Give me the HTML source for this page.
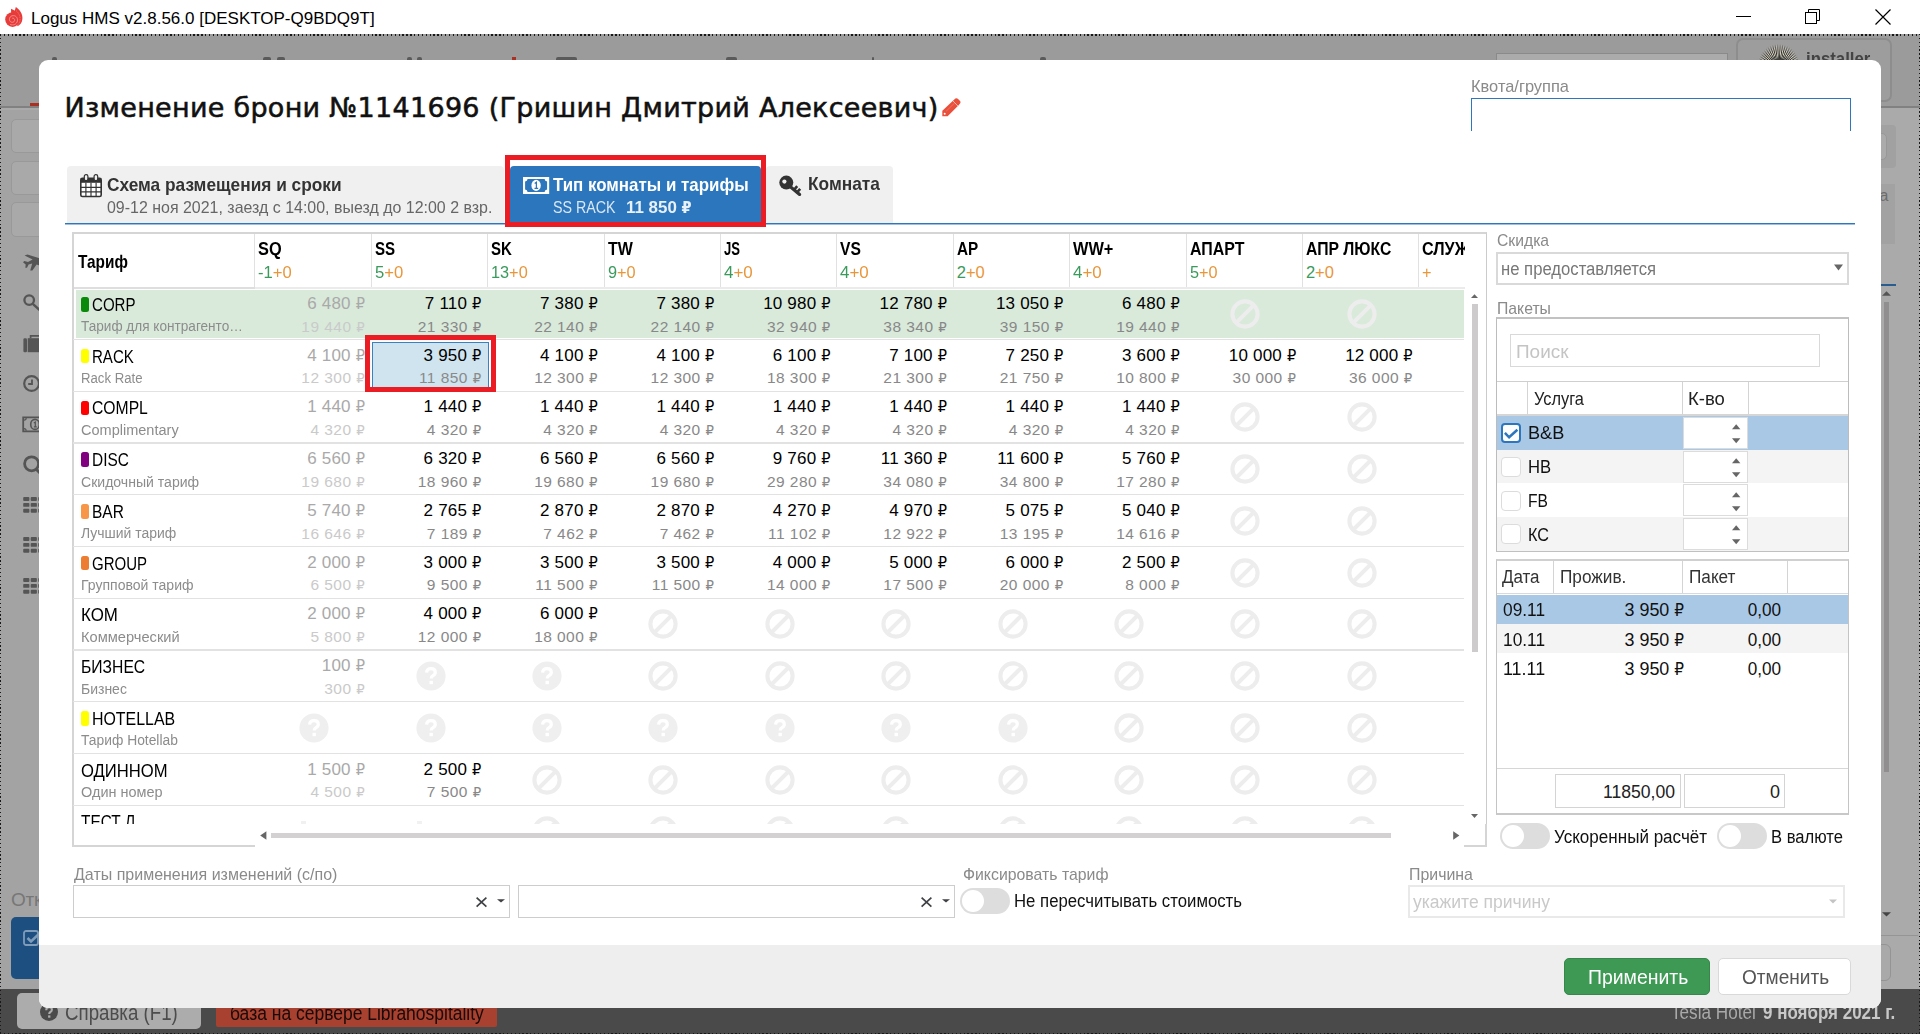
<!DOCTYPE html>
<html lang="ru"><head><meta charset="utf-8"><title>Logus HMS</title>
<style>
*{box-sizing:border-box;margin:0;padding:0}
html,body{width:1920px;height:1034px;overflow:hidden;background:#a4a4a4;font-family:"Liberation Sans","DejaVu Sans",sans-serif;}
.a{position:absolute}
.t{position:absolute;white-space:nowrap;line-height:1;transform-origin:0 50%}
.t.r{transform-origin:100% 50%}
#root{position:absolute;left:0;top:0;width:1920px;height:1034px;overflow:hidden}
.rub{font-family:"DejaVu Sans Condensed","DejaVu Sans",sans-serif;font-size:.95em}
svg{position:absolute;overflow:visible}
</style></head>
<body><div id="root">
<div class="a" style="left:0px;top:0px;width:1920px;height:34px;background:#fff"></div>
<div class="t" style="left:31.00px;top:9.61px;font-size:17px;color:#000;">Logus HMS v2.8.56.0 [DESKTOP-Q9BDQ9T]</div>
<svg style="left:5px;top:7px;" width="18" height="21" viewBox="0 0 18 21"><circle cx="7.6" cy="12.6" r="7.4" fill="#e73c3a"/><path d="M10.8 0C14.6 2.4 17.8 6.8 17.4 12C17.1 15.4 15.2 18 12.6 19.2L8.6 8.6Z" fill="#e73c3a"/><path d="M6 1.8L11.6 4.6L11 9L6.2 7.2Z" fill="#e73c3a"/><path d="M7.2 11.2C8.6 10.8 10 12 9.6 13.6C9.2 15.4 6.8 15.9 5.4 14.6C3.6 12.9 4.4 9.6 7 8.8C10.4 7.8 13 10.6 12.4 14C11.8 17.2 8.2 18.8 5.2 17.4" fill="none" stroke="#f4a19f" stroke-width="0.8"/><path d="M11 3.5C14 6 15.6 9.6 15 13.6C14.6 16 13.2 17.8 11.4 18.8" fill="none" stroke="#f08e8c" stroke-width="0.6" stroke-dasharray="1.6 0.8"/></svg>
<svg style="left:1736px;top:16px;" width="15" height="1" viewBox="0 0 15 1"><rect width="15" height="1" fill="#000"/></svg>
<svg style="left:1805px;top:9px;" width="16" height="16" viewBox="0 0 16 16"><rect x="0.5" y="3.5" width="11" height="11" fill="none" stroke="#000"/><path d="M3.5 3.5V0.5H14.5V11.5H11.5" fill="none" stroke="#000"/></svg>
<svg style="left:1875px;top:9px;" width="16" height="16" viewBox="0 0 16 16"><path d="M0.5 0.5L15.5 15.5M15.5 0.5L0.5 15.5" stroke="#000" stroke-width="1.2"/></svg>
<div class="a" style="left:0px;top:34px;width:1920px;height:1000px;background:#aaaaaa"></div>
<div class="a" style="left:0px;top:34px;width:1920px;height:74px;background:#9b9b9b;border-bottom:2px solid #818181"></div>
<div class="a" style="left:1496px;top:53px;width:232px;height:30px;background:#ababab;border:1px solid #8a8a8a"></div>
<div class="a" style="left:1736px;top:38px;width:156px;height:64px;background:#9d9d9d;border:2px solid #8d8d8d;border-radius:7px"></div>
<div class="a" style="left:1757px;top:44px;width:42px;height:40px;border-radius:50%;background:repeating-conic-gradient(from -90deg at 52% 62%,#d8d5c6 0deg,#8d8a80 1.6deg,#2e2e2b 3.2deg,#77746b 4.6deg,#d8d5c6 6deg);-webkit-mask-image:radial-gradient(ellipse at 52% 62%,#000 0,#000 52%,rgba(0,0,0,.55) 62%,transparent 72%);mask-image:radial-gradient(ellipse at 52% 62%,#000 0,#000 52%,rgba(0,0,0,.55) 62%,transparent 72%)"></div>
<div class="a" style="left:1764px;top:54px;width:30px;height:30px;border-radius:50%;background:radial-gradient(circle at 50% 60%,#2c2c2a 0,#3a3a37 45%,rgba(60,60,56,0) 75%)"></div>
<div class="t" style="left:1805.50px;top:48.92px;font-size:19px;font-weight:bold;color:#444;transform:scaleX(0.883);">installer</div>
<div class="a" style="left:30px;top:103px;width:9px;height:3px;background:#ab3024"></div>
<div class="a" style="left:52px;top:57px;width:5px;height:3px;background:#5a5a5a;border-radius:2px 2px 0 0"></div>
<div class="a" style="left:263px;top:57px;width:8px;height:3px;background:#5a5a5a;border-radius:2px 2px 0 0"></div>
<div class="a" style="left:277px;top:57px;width:8px;height:3px;background:#5a5a5a;border-radius:2px 2px 0 0"></div>
<div class="a" style="left:407px;top:57px;width:5px;height:3px;background:#5a5a5a;border-radius:2px 2px 0 0"></div>
<div class="a" style="left:417px;top:57px;width:5px;height:3px;background:#5a5a5a;border-radius:2px 2px 0 0"></div>
<div class="a" style="left:555.5px;top:57px;width:21px;height:3px;background:#5a5a5a;border-radius:2px 2px 0 0"></div>
<div class="a" style="left:726px;top:57px;width:11px;height:3px;background:#5a5a5a;border-radius:2px 2px 0 0"></div>
<div class="a" style="left:872px;top:57px;width:2px;height:3px;background:#5a5a5a;border-radius:2px 2px 0 0"></div>
<div class="a" style="left:1040px;top:57px;width:6px;height:3px;background:#5a5a5a;border-radius:2px 2px 0 0"></div>
<div class="a" style="left:512px;top:57px;width:4px;height:3px;background:#ab3024"></div>
<div class="a" style="left:0px;top:110px;width:60px;height:879px;background:#a3a3a3"></div>
<div class="a" style="left:11px;top:118.5px;width:40px;height:34.5px;background:#a9a9a9;border:1px solid #999;border-radius:5px"></div>
<div class="a" style="left:11px;top:160.5px;width:40px;height:34.5px;background:#a9a9a9;border:1px solid #999;border-radius:5px"></div>
<div class="a" style="left:11px;top:202px;width:40px;height:34.5px;background:#a9a9a9;border:1px solid #999;border-radius:5px"></div>
<svg style="left:22px;top:253px;" width="18" height="18" viewBox="0 0 18 18"><path d="M2.6 2.6L5.4 1.4L17.5 5.2V12.6L14.6 11.6L10.4 17.6H8.2L10.2 10.4L6.6 11.6L5 14.8H3.3L3.7 11.4L1 9.2L2.3 8L6 9L10.6 6.6Z" fill="#555"/></svg>
<svg style="left:22px;top:294px;" width="18" height="18" viewBox="0 0 18 18"><circle cx="7.2" cy="6.1" r="4.8" fill="none" stroke="#555" stroke-width="2.3"/><path d="M10.8 9.8L18 16.4" stroke="#555" stroke-width="2.5"/></svg>
<svg style="left:22px;top:334px;" width="18" height="20" viewBox="0 0 18 20"><rect x="1.4" y="4.2" width="3.6" height="14" rx="1.3" fill="#555"/><rect x="5.7" y="4.2" width="13" height="14" fill="#555"/><path d="M8.6 4.2V1.9H18" fill="none" stroke="#555" stroke-width="1.7"/></svg>
<svg style="left:22px;top:374px;" width="18" height="19" viewBox="0 0 18 19"><circle cx="9.6" cy="9.5" r="7.4" fill="none" stroke="#555" stroke-width="2.2"/><path d="M10 5.4V10H6.2" fill="none" stroke="#555" stroke-width="1.8"/></svg>
<svg style="left:22px;top:416px;" width="18" height="16" viewBox="0 0 18 16"><path d="M1.2 1.4H22V15.4H1.2Z" fill="none" stroke="#555" stroke-width="1.8"/><path d="M2 4.2Q4.2 4 4.2 2M2 12.6Q4.2 12.8 4.2 14.8" fill="none" stroke="#555" stroke-width="1.2"/><ellipse cx="13" cy="8.4" rx="4.3" ry="5" fill="none" stroke="#555" stroke-width="1.6"/><path d="M11.8 6.9L13.3 6V10.8M11.9 10.9H14.8" stroke="#555" stroke-width="1.2" fill="none"/></svg>
<svg style="left:22px;top:455px;" width="18" height="19" viewBox="0 0 18 19"><circle cx="9.6" cy="8.8" r="7" fill="none" stroke="#555" stroke-width="2.8"/><path d="M14 14L18 18" stroke="#555" stroke-width="3"/></svg>
<svg style="left:23px;top:497px;" width="17" height="16" viewBox="0 0 17 16"><rect x="0.2" y="0" width="6.2" height="3.9" rx="0.9" fill="#555"/><rect x="0.2" y="5.9" width="6.2" height="3.9" rx="0.9" fill="#555"/><rect x="0.2" y="11.8" width="6.2" height="3.9" rx="0.9" fill="#555"/><rect x="7.7" y="0" width="6.2" height="3.9" rx="0.9" fill="#555"/><rect x="7.7" y="5.9" width="6.2" height="3.9" rx="0.9" fill="#555"/><rect x="7.7" y="11.8" width="6.2" height="3.9" rx="0.9" fill="#555"/><rect x="15.2" y="0" width="6.2" height="3.9" rx="0.9" fill="#555"/><rect x="15.2" y="5.9" width="6.2" height="3.9" rx="0.9" fill="#555"/><rect x="15.2" y="11.8" width="6.2" height="3.9" rx="0.9" fill="#555"/></svg>
<svg style="left:23px;top:537.3px;" width="17" height="16" viewBox="0 0 17 16"><rect x="0.2" y="0" width="6.2" height="3.9" rx="0.9" fill="#555"/><rect x="0.2" y="5.9" width="6.2" height="3.9" rx="0.9" fill="#555"/><rect x="0.2" y="11.8" width="6.2" height="3.9" rx="0.9" fill="#555"/><rect x="7.7" y="0" width="6.2" height="3.9" rx="0.9" fill="#555"/><rect x="7.7" y="5.9" width="6.2" height="3.9" rx="0.9" fill="#555"/><rect x="7.7" y="11.8" width="6.2" height="3.9" rx="0.9" fill="#555"/><rect x="15.2" y="0" width="6.2" height="3.9" rx="0.9" fill="#555"/><rect x="15.2" y="5.9" width="6.2" height="3.9" rx="0.9" fill="#555"/><rect x="15.2" y="11.8" width="6.2" height="3.9" rx="0.9" fill="#555"/></svg>
<svg style="left:23px;top:578px;" width="17" height="16" viewBox="0 0 17 16"><rect x="0.2" y="0" width="6.2" height="3.9" rx="0.9" fill="#555"/><rect x="0.2" y="5.9" width="6.2" height="3.9" rx="0.9" fill="#555"/><rect x="0.2" y="11.8" width="6.2" height="3.9" rx="0.9" fill="#555"/><rect x="7.7" y="0" width="6.2" height="3.9" rx="0.9" fill="#555"/><rect x="7.7" y="5.9" width="6.2" height="3.9" rx="0.9" fill="#555"/><rect x="7.7" y="11.8" width="6.2" height="3.9" rx="0.9" fill="#555"/><rect x="15.2" y="0" width="6.2" height="3.9" rx="0.9" fill="#555"/><rect x="15.2" y="5.9" width="6.2" height="3.9" rx="0.9" fill="#555"/><rect x="15.2" y="11.8" width="6.2" height="3.9" rx="0.9" fill="#555"/></svg>
<div class="t" style="left:11.00px;top:889.92px;font-size:19px;letter-spacing:-0.3px;color:#777;">Отк</div>
<div class="a" style="left:10.5px;top:917px;width:60px;height:61.5px;background:#1d5080;border-radius:5px"></div>
<svg style="left:23px;top:930px;" width="18" height="16" viewBox="0 0 18 16"><rect x="1" y="1" width="14" height="14" rx="2" fill="none" stroke="#7f9cb8" stroke-width="1.8"/><path d="M4.5 8L8 11.5L17 3" fill="none" stroke="#7f9cb8" stroke-width="2.6"/></svg>
<div class="a" style="left:1881px;top:125px;width:15px;height:43px;background:#a1a1a1;border-radius:0 4px 4px 0"></div>
<div class="a" style="left:1870px;top:133px;width:17px;height:27px;background:#ababab;border:1px solid #989898;border-radius:5px"></div>
<div class="a" style="left:1881px;top:184px;width:14px;height:60px;background:#a2a2a2"></div>
<div class="t" style="left:1879.50px;top:188.46px;font-size:16px;color:#6d6d6d;">а</div>
<div class="a" style="left:1881px;top:284px;width:15px;height:1.5px;background:#2a5d8f"></div>
<svg style="left:1882px;top:291px;" width="9" height="5" viewBox="0 0 9 5"><path d="M0 4.8L4.5 0.3L9 4.8Z" fill="#555"/></svg>
<div class="a" style="left:1884px;top:301.5px;width:5.3px;height:470px;background:#908e8f"></div>
<svg style="left:1881.5px;top:912px;" width="9" height="5" viewBox="0 0 9 5"><path d="M0 0.3H9L4.5 4.6Z" fill="#444"/></svg>
<div class="a" style="left:1881px;top:934.5px;width:37px;height:1.3px;background:#959595"></div>
<div class="a" style="left:1870px;top:944px;width:21px;height:37px;background:#a9a9a9;border:1px solid #949494;border-radius:6px"></div>
<div class="a" style="left:0px;top:989px;width:1920px;height:45px;background:#4a4a4a"></div>
<div class="a" style="left:17px;top:993px;width:184px;height:36px;background:#acacac;border-radius:5px"></div>
<svg style="left:40px;top:1003px;" width="18" height="18" viewBox="0 0 18 18"><circle cx="9" cy="9" r="9" fill="#4a4a4a"/><path d="M6.2 7.2Q6.3 4.3 9.1 4.3Q11.9 4.3 11.9 6.8Q11.9 8.2 10.4 9Q9.2 9.7 9.2 11" fill="none" stroke="#acacac" stroke-width="2.1"/><rect x="8.1" y="12.4" width="2.3" height="2.3" fill="#acacac"/></svg>
<div class="t" style="left:64.80px;top:1001.55px;font-size:22.5px;color:#4c4c4c;transform:scaleX(0.831);">Справка (F1)</div>
<div class="a" style="left:216px;top:993px;width:281px;height:34px;background:#a8412f;border-radius:2px"></div>
<div class="t" style="left:230.00px;top:1003.27px;font-size:20px;color:#1a0a08;transform:scaleX(0.874);">база на сервере Librahospitality</div>
<div class="t" style="left:1671.00px;top:1001.65px;font-size:20.5px;color:#a9a9a9;transform:scaleX(0.836);">Tesla Hotel</div>
<div class="t" style="left:1763.00px;top:1001.65px;font-size:20.5px;font-weight:bold;color:#c8c8c8;transform:scaleX(0.828);">9 ноября 2021 г.</div>
<div class="a" style="left:0px;top:34px;width:1920px;height:1.5px;background:repeating-linear-gradient(90deg,#181818 0,#181818 1.3px,transparent 1.3px,transparent 3.87px)"></div>
<div class="a" style="left:0px;top:1032.5px;width:1920px;height:1.5px;background:repeating-linear-gradient(90deg,#181818 0,#181818 1.3px,transparent 1.3px,transparent 3.87px)"></div>
<div class="a" style="left:0px;top:34px;width:1.4px;height:1000px;background:repeating-linear-gradient(180deg,#181818 0,#181818 1.3px,transparent 1.3px,transparent 3.87px)"></div>
<div class="a" style="left:1918.5px;top:34px;width:1.5px;height:1000px;background:repeating-linear-gradient(180deg,#181818 0,#181818 1.3px,transparent 1.3px,transparent 3.87px)"></div>
<div class="a" style="left:39px;top:60px;width:1842px;height:948px;background:#fff;border-radius:9px;overflow:hidden">
<div class="a" style="left:0;top:885px;width:1842px;height:63px;background:#eeeeee"></div>
</div>
<div class="t" style="left:64.50px;top:93.54px;font-size:27px;letter-spacing:0.28px;color:#111;font-family:'DejaVu Sans',sans-serif;-webkit-text-stroke:0.55px #111;">Изменение брони №1141696 (Гришин Дмитрий Алексеевич)</div>
<svg style="left:941.5px;top:97.5px;" width="19" height="18.5" viewBox="0 0 19 18.5"><path d="M0.3 18.2V12.7L11.5 2.2L13.3 0.6Q14.6 -0.3 15.8 0.8L18.1 3.1Q19.1 4.3 18 5.6L16.4 7.4L5.6 18.2Z" fill="#e8503c"/><path d="M10.9 2.9L15.9 8" stroke="#fbe3df" stroke-width="0.7"/><path d="M4.2 13.2L12.6 5" stroke="#f08a7c" stroke-width="0.6"/><circle cx="2.7" cy="15.7" r="1" fill="#fff"/></svg>
<div class="t" style="left:1471.00px;top:77.61px;font-size:17px;color:#8a8a8a;transform:scaleX(0.966);">Квота/группа</div>
<div class="a" style="left:1471px;top:98px;width:380px;height:33px;border:1px solid #2e76bd;border-bottom:none"></div>
<div class="a" style="left:67px;top:166px;width:437px;height:58px;background:#f0f0f0;border-radius:4px 4px 0 0"></div>
<div class="a" style="left:766px;top:166px;width:127px;height:58px;background:#f0f0f0;border-radius:4px 4px 0 0"></div>
<div class="a" style="left:65px;top:223px;width:1790px;height:1px;background:#2e76bd"></div>
<div class="a" style="left:65px;top:224px;width:1790px;height:1px;background:#9dbfe0"></div>
<div class="a" style="left:510px;top:166px;width:251px;height:58px;background:#2b76bc;border-radius:4px 4px 0 0"></div>
<div class="a" style="left:505px;top:155px;width:261px;height:72px;border:5px solid #ec1c24"></div>
<svg style="left:80.3px;top:174px;" width="22" height="23.3" viewBox="0 0 22 23.3"><rect x="0.8" y="4.4" width="20.4" height="18.1" rx="1.6" fill="#fff" stroke="#333" stroke-width="1.6"/><rect x="0.8" y="4.4" width="20.4" height="4.4" fill="#333"/><path d="M0.8 13.4H21.2M0.8 17.9H21.2M5.9 8.8V22.5M11 8.8V22.5M16.1 8.8V22.5" stroke="#333" stroke-width="1.15" fill="none"/><rect x="4.3" y="0.6" width="3.6" height="6" rx="1.7" fill="#f0f0f0" stroke="#333" stroke-width="1.2"/><rect x="14.1" y="0.6" width="3.6" height="6" rx="1.7" fill="#f0f0f0" stroke="#333" stroke-width="1.2"/></svg>
<div class="t" style="left:107.00px;top:174.52px;font-size:19px;font-weight:bold;color:#333;transform:scaleX(0.910);">Схема размещения и сроки</div>
<div class="t" style="left:107.00px;top:198.93px;font-size:16.5px;color:#666;transform:scaleX(0.967);">09-12 ноя 2021, заезд с 14:00, выезд до 12:00 2 взр.</div>
<svg style="left:522.8px;top:177px;" width="26.2" height="17" viewBox="0 0 26.2 17"><rect x="0" y="0" width="26.2" height="17" fill="#fff"/><path d="M4.6 2.1H21.6Q21.8 4.4 24.1 4.6V12.4Q21.8 12.6 21.6 14.9H4.6Q4.4 12.6 2.1 12.4V4.6Q4.4 4.4 4.6 2.1Z" fill="#2b76bc"/><ellipse cx="13.1" cy="8.4" rx="4.7" ry="5.6" fill="#fff"/><path d="M11.7 6.5L13.4 5.2V11.2M11.5 11.4H15.2" stroke="#2b76bc" stroke-width="1.25" fill="none"/></svg>
<div class="t" style="left:553.00px;top:174.62px;font-size:19px;font-weight:bold;color:#fff;transform:scaleX(0.890);">Тип комнаты и тарифы</div>
<div class="t" style="left:553.00px;top:198.83px;font-size:16.5px;color:#dbe7f3;transform:scaleX(0.864);">SS RACK</div>
<div class="t" style="left:626.40px;top:198.83px;font-size:16.5px;font-weight:bold;color:#e8f0f8;transform:scaleX(1.025);">11 850 <span class="rub">₽</span></div>
<svg style="left:779px;top:175px;" width="24" height="22" viewBox="0 0 24 22"><circle cx="7.3" cy="7.6" r="7" fill="#333"/><circle cx="5.4" cy="6.6" r="2.1" fill="#f0f0f0"/><path d="M10.5 11L20.6 19.4" stroke="#333" stroke-width="3.2" stroke-linecap="round"/><path d="M15.2 14.6L18.2 11.2M18.2 17.2L21.2 13.8" stroke="#333" stroke-width="2.6"/></svg>
<div class="t" style="left:808.30px;top:174.42px;font-size:19px;font-weight:bold;color:#333;transform:scaleX(0.912);">Комната</div>
<div class="a" style="left:72px;top:232px;width:1415px;height:615px;border:2px solid #d5d5d5;border-bottom:none;border-right:1px solid #cbcbcb"></div>
<div class="a" style="left:1485px;top:824px;width:2px;height:23px;background:#d5d5d5"></div>
<div class="a" style="left:72px;top:845px;width:183px;height:2px;background:#d5d5d5"></div>
<div class="a" style="left:1464px;top:845px;width:23px;height:2px;background:#d5d5d5"></div>
<div class="t" style="left:77.60px;top:252.64px;font-size:18.5px;font-weight:bold;color:#000;transform:scaleX(0.831);">Тариф</div>
<div class="a" style="left:73px;top:234px;width:1392px;height:600px;overflow:hidden">
<div class="a" style="left:181.3px;top:0px;width:1px;height:54px;background:#e1e1e1"></div>
<div class="t" style="left:185.30px;top:6.16px;font-size:18px;font-weight:bold;color:#000;transform:scaleX(0.907);">SQ</div>
<div class="t" style="left:185.30px;top:30.03px;font-size:16.5px;color:#000;transform:scaleX(1.007);"><span style="color:#3a9a5c">-1</span><span style="color:#e8963a">+0</span></div>
<div class="a" style="left:297.70000000000005px;top:0px;width:1px;height:54px;background:#e1e1e1"></div>
<div class="t" style="left:301.70px;top:6.16px;font-size:18px;font-weight:bold;color:#000;transform:scaleX(0.839);">SS</div>
<div class="t" style="left:301.70px;top:30.03px;font-size:16.5px;color:#000;transform:scaleX(1.011);"><span style="color:#3a9a5c">5</span><span style="color:#e8963a">+0</span></div>
<div class="a" style="left:414.1px;top:0px;width:1px;height:54px;background:#e1e1e1"></div>
<div class="t" style="left:418.10px;top:6.16px;font-size:18px;font-weight:bold;color:#000;transform:scaleX(0.833);">SK</div>
<div class="t" style="left:418.10px;top:30.03px;font-size:16.5px;color:#000;transform:scaleX(0.987);"><span style="color:#3a9a5c">13</span><span style="color:#e8963a">+0</span></div>
<div class="a" style="left:530.5px;top:0px;width:1px;height:54px;background:#e1e1e1"></div>
<div class="t" style="left:534.50px;top:6.16px;font-size:18px;font-weight:bold;color:#000;transform:scaleX(0.889);">TW</div>
<div class="t" style="left:534.50px;top:30.03px;font-size:16.5px;color:#000;transform:scaleX(0.989);"><span style="color:#3a9a5c">9</span><span style="color:#e8963a">+0</span></div>
<div class="a" style="left:646.9000000000001px;top:0px;width:1px;height:54px;background:#e1e1e1"></div>
<div class="t" style="left:650.90px;top:6.16px;font-size:18px;font-weight:bold;color:#000;transform:scaleX(0.727);">JS</div>
<div class="t" style="left:650.90px;top:30.03px;font-size:16.5px;color:#000;transform:scaleX(1.026);"><span style="color:#3a9a5c">4</span><span style="color:#e8963a">+0</span></div>
<div class="a" style="left:763.3px;top:0px;width:1px;height:54px;background:#e1e1e1"></div>
<div class="t" style="left:767.30px;top:6.16px;font-size:18px;font-weight:bold;color:#000;transform:scaleX(0.869);">VS</div>
<div class="t" style="left:767.30px;top:30.03px;font-size:16.5px;color:#000;transform:scaleX(1.026);"><span style="color:#3a9a5c">4</span><span style="color:#e8963a">+0</span></div>
<div class="a" style="left:879.7px;top:0px;width:1px;height:54px;background:#e1e1e1"></div>
<div class="t" style="left:883.70px;top:6.16px;font-size:18px;font-weight:bold;color:#000;transform:scaleX(0.849);">AP</div>
<div class="t" style="left:883.70px;top:30.03px;font-size:16.5px;color:#000;transform:scaleX(1.000);"><span style="color:#3a9a5c">2</span><span style="color:#e8963a">+0</span></div>
<div class="a" style="left:996.1000000000001px;top:0px;width:1px;height:54px;background:#e1e1e1"></div>
<div class="t" style="left:1000.10px;top:6.16px;font-size:18px;font-weight:bold;color:#000;transform:scaleX(0.906);">WW+</div>
<div class="t" style="left:1000.10px;top:30.03px;font-size:16.5px;color:#000;transform:scaleX(1.026);"><span style="color:#3a9a5c">4</span><span style="color:#e8963a">+0</span></div>
<div class="a" style="left:1112.5px;top:0px;width:1px;height:54px;background:#e1e1e1"></div>
<div class="t" style="left:1116.50px;top:6.16px;font-size:18px;font-weight:bold;color:#000;transform:scaleX(0.885);">АПАРТ</div>
<div class="t" style="left:1116.50px;top:30.03px;font-size:16.5px;color:#000;transform:scaleX(0.985);"><span style="color:#3a9a5c">5</span><span style="color:#e8963a">+0</span></div>
<div class="a" style="left:1228.9px;top:0px;width:1px;height:54px;background:#e1e1e1"></div>
<div class="t" style="left:1232.90px;top:6.16px;font-size:18px;font-weight:bold;color:#000;transform:scaleX(0.874);">АПР ЛЮКС</div>
<div class="t" style="left:1232.90px;top:30.03px;font-size:16.5px;color:#000;transform:scaleX(1.000);"><span style="color:#3a9a5c">2</span><span style="color:#e8963a">+0</span></div>
<div class="a" style="left:1345.3px;top:0px;width:1px;height:54px;background:#e1e1e1"></div>
<div class="t" style="left:1349.30px;top:6.16px;font-size:18px;font-weight:bold;color:#000;transform:scaleX(0.898);">СЛУЖБ</div>
<div class="t" style="left:1349.30px;top:30.03px;font-size:16.5px;color:#000;transform:scaleX(0.984);"><span style="color:#3a9a5c"></span><span style="color:#e8963a">+</span></div>
</div>
<div class="a" style="left:74px;top:287px;width:1391px;height:2px;background:#ebebeb"></div>
<div class="a" style="left:74px;top:287px;width:181px;height:2px;background:#dedede"></div>
<div class="a" style="left:73px;top:288.5px;width:1391px;height:535.5px;overflow:hidden">
<div class="a" style="left:3px;top:1.0px;width:1388px;height:48.6px;background:#d9eadb"></div>
<div class="a" style="left:0;top:50.35px;width:1400px;height:1.3px;background:#e2e2e2"></div>
<div class="a" style="left:8px;top:8.50px;width:7.5px;height:14.5px;border-radius:2.5px;background:#0a8a0a"></div>
<div class="t" style="left:18.50px;top:7.34px;font-size:18.5px;color:#000;transform:scaleX(0.814);">CORP</div>
<div class="t" style="left:8.00px;top:29.98px;font-size:15.5px;color:#8c8c8c;transform:scaleX(0.877);">Тариф для контрагенто…</div>
<div class="t" style="right:1098.9px;top:6.31px;font-size:17px;letter-spacing:0.2px;color:#a9a9a9">6 480 <span class="rub">₽</span></div>
<div class="t" style="right:1098.9px;top:30.08px;font-size:15.5px;letter-spacing:0.45px;color:#cacaca">19 440 <span class="rub">₽</span></div>
<div class="t" style="right:982.5px;top:6.31px;font-size:17px;letter-spacing:0.2px;color:#000">7 110 <span class="rub">₽</span></div>
<div class="t" style="right:982.5px;top:30.08px;font-size:15.5px;letter-spacing:0.45px;color:#888">21 330 <span class="rub">₽</span></div>
<div class="t" style="right:866.1px;top:6.31px;font-size:17px;letter-spacing:0.2px;color:#000">7 380 <span class="rub">₽</span></div>
<div class="t" style="right:866.1px;top:30.08px;font-size:15.5px;letter-spacing:0.45px;color:#888">22 140 <span class="rub">₽</span></div>
<div class="t" style="right:749.7px;top:6.31px;font-size:17px;letter-spacing:0.2px;color:#000">7 380 <span class="rub">₽</span></div>
<div class="t" style="right:749.7px;top:30.08px;font-size:15.5px;letter-spacing:0.45px;color:#888">22 140 <span class="rub">₽</span></div>
<div class="t" style="right:633.3px;top:6.31px;font-size:17px;letter-spacing:0.2px;color:#000">10 980 <span class="rub">₽</span></div>
<div class="t" style="right:633.3px;top:30.08px;font-size:15.5px;letter-spacing:0.45px;color:#888">32 940 <span class="rub">₽</span></div>
<div class="t" style="right:516.9px;top:6.31px;font-size:17px;letter-spacing:0.2px;color:#000">12 780 <span class="rub">₽</span></div>
<div class="t" style="right:516.9px;top:30.08px;font-size:15.5px;letter-spacing:0.45px;color:#888">38 340 <span class="rub">₽</span></div>
<div class="t" style="right:400.5px;top:6.31px;font-size:17px;letter-spacing:0.2px;color:#000">13 050 <span class="rub">₽</span></div>
<div class="t" style="right:400.5px;top:30.08px;font-size:15.5px;letter-spacing:0.45px;color:#888">39 150 <span class="rub">₽</span></div>
<div class="t" style="right:284.1px;top:6.31px;font-size:17px;letter-spacing:0.2px;color:#000">6 480 <span class="rub">₽</span></div>
<div class="t" style="right:284.1px;top:30.08px;font-size:15.5px;letter-spacing:0.45px;color:#888">19 440 <span class="rub">₽</span></div>
<svg style="left:1157.4px;top:10.3px" width="30" height="30" viewBox="0 0 30 30"><circle cx="15" cy="15" r="12.6" fill="none" stroke="#ededed" stroke-width="4.1"/><path d="M6.6 23.4L23.4 6.6" stroke="#ededed" stroke-width="4.1"/></svg>
<svg style="left:1273.8px;top:10.3px" width="30" height="30" viewBox="0 0 30 30"><circle cx="15" cy="15" r="12.6" fill="none" stroke="#ededed" stroke-width="4.1"/><path d="M6.6 23.4L23.4 6.6" stroke="#ededed" stroke-width="4.1"/></svg>
<div class="a" style="left:0;top:102.10px;width:1400px;height:1.3px;background:#e2e2e2"></div>
<div class="a" style="left:8px;top:60.25px;width:7.5px;height:14.5px;border-radius:2.5px;background:#ffff00"></div>
<div class="t" style="left:18.50px;top:59.09px;font-size:18.5px;color:#000;transform:scaleX(0.813);">RACK</div>
<div class="t" style="left:8.00px;top:81.73px;font-size:15.5px;color:#8c8c8c;transform:scaleX(0.850);">Rack Rate</div>
<div class="t" style="right:1098.9px;top:58.06px;font-size:17px;letter-spacing:0.2px;color:#a9a9a9">4 100 <span class="rub">₽</span></div>
<div class="t" style="right:1098.9px;top:81.83px;font-size:15.5px;letter-spacing:0.45px;color:#cacaca">12 300 <span class="rub">₽</span></div>
<div class="t" style="right:982.5px;top:58.06px;font-size:17px;letter-spacing:0.2px;color:#000">3 950 <span class="rub">₽</span></div>
<div class="t" style="right:982.5px;top:81.83px;font-size:15.5px;letter-spacing:0.45px;color:#888">11 850 <span class="rub">₽</span></div>
<div class="t" style="right:866.1px;top:58.06px;font-size:17px;letter-spacing:0.2px;color:#000">4 100 <span class="rub">₽</span></div>
<div class="t" style="right:866.1px;top:81.83px;font-size:15.5px;letter-spacing:0.45px;color:#888">12 300 <span class="rub">₽</span></div>
<div class="t" style="right:749.7px;top:58.06px;font-size:17px;letter-spacing:0.2px;color:#000">4 100 <span class="rub">₽</span></div>
<div class="t" style="right:749.7px;top:81.83px;font-size:15.5px;letter-spacing:0.45px;color:#888">12 300 <span class="rub">₽</span></div>
<div class="t" style="right:633.3px;top:58.06px;font-size:17px;letter-spacing:0.2px;color:#000">6 100 <span class="rub">₽</span></div>
<div class="t" style="right:633.3px;top:81.83px;font-size:15.5px;letter-spacing:0.45px;color:#888">18 300 <span class="rub">₽</span></div>
<div class="t" style="right:516.9px;top:58.06px;font-size:17px;letter-spacing:0.2px;color:#000">7 100 <span class="rub">₽</span></div>
<div class="t" style="right:516.9px;top:81.83px;font-size:15.5px;letter-spacing:0.45px;color:#888">21 300 <span class="rub">₽</span></div>
<div class="t" style="right:400.5px;top:58.06px;font-size:17px;letter-spacing:0.2px;color:#000">7 250 <span class="rub">₽</span></div>
<div class="t" style="right:400.5px;top:81.83px;font-size:15.5px;letter-spacing:0.45px;color:#888">21 750 <span class="rub">₽</span></div>
<div class="t" style="right:284.1px;top:58.06px;font-size:17px;letter-spacing:0.2px;color:#000">3 600 <span class="rub">₽</span></div>
<div class="t" style="right:284.1px;top:81.83px;font-size:15.5px;letter-spacing:0.45px;color:#888">10 800 <span class="rub">₽</span></div>
<div class="t" style="right:167.7px;top:58.06px;font-size:17px;letter-spacing:0.2px;color:#000">10 000 <span class="rub">₽</span></div>
<div class="t" style="right:167.7px;top:81.83px;font-size:15.5px;letter-spacing:0.45px;color:#888">30 000 <span class="rub">₽</span></div>
<div class="t" style="right:51.3px;top:58.06px;font-size:17px;letter-spacing:0.2px;color:#000">12 000 <span class="rub">₽</span></div>
<div class="t" style="right:51.3px;top:81.83px;font-size:15.5px;letter-spacing:0.45px;color:#888">36 000 <span class="rub">₽</span></div>
<div class="a" style="left:0;top:153.85px;width:1400px;height:1.3px;background:#e2e2e2"></div>
<div class="a" style="left:8px;top:112.00px;width:7.5px;height:14.5px;border-radius:2.5px;background:#ff0000"></div>
<div class="t" style="left:18.50px;top:110.84px;font-size:18.5px;color:#000;transform:scaleX(0.849);">COMPL</div>
<div class="t" style="left:8.00px;top:133.48px;font-size:15.5px;color:#8c8c8c;transform:scaleX(0.937);">Complimentary</div>
<div class="t" style="right:1098.9px;top:109.81px;font-size:17px;letter-spacing:0.2px;color:#a9a9a9">1 440 <span class="rub">₽</span></div>
<div class="t" style="right:1098.9px;top:133.58px;font-size:15.5px;letter-spacing:0.45px;color:#cacaca">4 320 <span class="rub">₽</span></div>
<div class="t" style="right:982.5px;top:109.81px;font-size:17px;letter-spacing:0.2px;color:#000">1 440 <span class="rub">₽</span></div>
<div class="t" style="right:982.5px;top:133.58px;font-size:15.5px;letter-spacing:0.45px;color:#888">4 320 <span class="rub">₽</span></div>
<div class="t" style="right:866.1px;top:109.81px;font-size:17px;letter-spacing:0.2px;color:#000">1 440 <span class="rub">₽</span></div>
<div class="t" style="right:866.1px;top:133.58px;font-size:15.5px;letter-spacing:0.45px;color:#888">4 320 <span class="rub">₽</span></div>
<div class="t" style="right:749.7px;top:109.81px;font-size:17px;letter-spacing:0.2px;color:#000">1 440 <span class="rub">₽</span></div>
<div class="t" style="right:749.7px;top:133.58px;font-size:15.5px;letter-spacing:0.45px;color:#888">4 320 <span class="rub">₽</span></div>
<div class="t" style="right:633.3px;top:109.81px;font-size:17px;letter-spacing:0.2px;color:#000">1 440 <span class="rub">₽</span></div>
<div class="t" style="right:633.3px;top:133.58px;font-size:15.5px;letter-spacing:0.45px;color:#888">4 320 <span class="rub">₽</span></div>
<div class="t" style="right:516.9px;top:109.81px;font-size:17px;letter-spacing:0.2px;color:#000">1 440 <span class="rub">₽</span></div>
<div class="t" style="right:516.9px;top:133.58px;font-size:15.5px;letter-spacing:0.45px;color:#888">4 320 <span class="rub">₽</span></div>
<div class="t" style="right:400.5px;top:109.81px;font-size:17px;letter-spacing:0.2px;color:#000">1 440 <span class="rub">₽</span></div>
<div class="t" style="right:400.5px;top:133.58px;font-size:15.5px;letter-spacing:0.45px;color:#888">4 320 <span class="rub">₽</span></div>
<div class="t" style="right:284.1px;top:109.81px;font-size:17px;letter-spacing:0.2px;color:#000">1 440 <span class="rub">₽</span></div>
<div class="t" style="right:284.1px;top:133.58px;font-size:15.5px;letter-spacing:0.45px;color:#888">4 320 <span class="rub">₽</span></div>
<svg style="left:1157.4px;top:113.8px" width="30" height="30" viewBox="0 0 30 30"><circle cx="15" cy="15" r="12.6" fill="none" stroke="#ededed" stroke-width="4.1"/><path d="M6.6 23.4L23.4 6.6" stroke="#ededed" stroke-width="4.1"/></svg>
<svg style="left:1273.8px;top:113.8px" width="30" height="30" viewBox="0 0 30 30"><circle cx="15" cy="15" r="12.6" fill="none" stroke="#ededed" stroke-width="4.1"/><path d="M6.6 23.4L23.4 6.6" stroke="#ededed" stroke-width="4.1"/></svg>
<div class="a" style="left:0;top:205.60px;width:1400px;height:1.3px;background:#e2e2e2"></div>
<div class="a" style="left:8px;top:163.75px;width:7.5px;height:14.5px;border-radius:2.5px;background:#800080"></div>
<div class="t" style="left:18.50px;top:162.59px;font-size:18.5px;color:#000;transform:scaleX(0.833);">DISC</div>
<div class="t" style="left:8.00px;top:185.23px;font-size:15.5px;color:#8c8c8c;transform:scaleX(0.907);">Скидочный тариф</div>
<div class="t" style="right:1098.9px;top:161.56px;font-size:17px;letter-spacing:0.2px;color:#a9a9a9">6 560 <span class="rub">₽</span></div>
<div class="t" style="right:1098.9px;top:185.33px;font-size:15.5px;letter-spacing:0.45px;color:#cacaca">19 680 <span class="rub">₽</span></div>
<div class="t" style="right:982.5px;top:161.56px;font-size:17px;letter-spacing:0.2px;color:#000">6 320 <span class="rub">₽</span></div>
<div class="t" style="right:982.5px;top:185.33px;font-size:15.5px;letter-spacing:0.45px;color:#888">18 960 <span class="rub">₽</span></div>
<div class="t" style="right:866.1px;top:161.56px;font-size:17px;letter-spacing:0.2px;color:#000">6 560 <span class="rub">₽</span></div>
<div class="t" style="right:866.1px;top:185.33px;font-size:15.5px;letter-spacing:0.45px;color:#888">19 680 <span class="rub">₽</span></div>
<div class="t" style="right:749.7px;top:161.56px;font-size:17px;letter-spacing:0.2px;color:#000">6 560 <span class="rub">₽</span></div>
<div class="t" style="right:749.7px;top:185.33px;font-size:15.5px;letter-spacing:0.45px;color:#888">19 680 <span class="rub">₽</span></div>
<div class="t" style="right:633.3px;top:161.56px;font-size:17px;letter-spacing:0.2px;color:#000">9 760 <span class="rub">₽</span></div>
<div class="t" style="right:633.3px;top:185.33px;font-size:15.5px;letter-spacing:0.45px;color:#888">29 280 <span class="rub">₽</span></div>
<div class="t" style="right:516.9px;top:161.56px;font-size:17px;letter-spacing:0.2px;color:#000">11 360 <span class="rub">₽</span></div>
<div class="t" style="right:516.9px;top:185.33px;font-size:15.5px;letter-spacing:0.45px;color:#888">34 080 <span class="rub">₽</span></div>
<div class="t" style="right:400.5px;top:161.56px;font-size:17px;letter-spacing:0.2px;color:#000">11 600 <span class="rub">₽</span></div>
<div class="t" style="right:400.5px;top:185.33px;font-size:15.5px;letter-spacing:0.45px;color:#888">34 800 <span class="rub">₽</span></div>
<div class="t" style="right:284.1px;top:161.56px;font-size:17px;letter-spacing:0.2px;color:#000">5 760 <span class="rub">₽</span></div>
<div class="t" style="right:284.1px;top:185.33px;font-size:15.5px;letter-spacing:0.45px;color:#888">17 280 <span class="rub">₽</span></div>
<svg style="left:1157.4px;top:165.5px" width="30" height="30" viewBox="0 0 30 30"><circle cx="15" cy="15" r="12.6" fill="none" stroke="#ededed" stroke-width="4.1"/><path d="M6.6 23.4L23.4 6.6" stroke="#ededed" stroke-width="4.1"/></svg>
<svg style="left:1273.8px;top:165.5px" width="30" height="30" viewBox="0 0 30 30"><circle cx="15" cy="15" r="12.6" fill="none" stroke="#ededed" stroke-width="4.1"/><path d="M6.6 23.4L23.4 6.6" stroke="#ededed" stroke-width="4.1"/></svg>
<div class="a" style="left:0;top:257.35px;width:1400px;height:1.3px;background:#e2e2e2"></div>
<div class="a" style="left:8px;top:215.50px;width:7.5px;height:14.5px;border-radius:2.5px;background:#f79646"></div>
<div class="t" style="left:18.50px;top:214.34px;font-size:18.5px;color:#000;transform:scaleX(0.837);">BAR</div>
<div class="t" style="left:8.00px;top:236.98px;font-size:15.5px;color:#8c8c8c;transform:scaleX(0.900);">Лучший тариф</div>
<div class="t" style="right:1098.9px;top:213.31px;font-size:17px;letter-spacing:0.2px;color:#a9a9a9">5 740 <span class="rub">₽</span></div>
<div class="t" style="right:1098.9px;top:237.08px;font-size:15.5px;letter-spacing:0.45px;color:#cacaca">16 646 <span class="rub">₽</span></div>
<div class="t" style="right:982.5px;top:213.31px;font-size:17px;letter-spacing:0.2px;color:#000">2 765 <span class="rub">₽</span></div>
<div class="t" style="right:982.5px;top:237.08px;font-size:15.5px;letter-spacing:0.45px;color:#888">7 189 <span class="rub">₽</span></div>
<div class="t" style="right:866.1px;top:213.31px;font-size:17px;letter-spacing:0.2px;color:#000">2 870 <span class="rub">₽</span></div>
<div class="t" style="right:866.1px;top:237.08px;font-size:15.5px;letter-spacing:0.45px;color:#888">7 462 <span class="rub">₽</span></div>
<div class="t" style="right:749.7px;top:213.31px;font-size:17px;letter-spacing:0.2px;color:#000">2 870 <span class="rub">₽</span></div>
<div class="t" style="right:749.7px;top:237.08px;font-size:15.5px;letter-spacing:0.45px;color:#888">7 462 <span class="rub">₽</span></div>
<div class="t" style="right:633.3px;top:213.31px;font-size:17px;letter-spacing:0.2px;color:#000">4 270 <span class="rub">₽</span></div>
<div class="t" style="right:633.3px;top:237.08px;font-size:15.5px;letter-spacing:0.45px;color:#888">11 102 <span class="rub">₽</span></div>
<div class="t" style="right:516.9px;top:213.31px;font-size:17px;letter-spacing:0.2px;color:#000">4 970 <span class="rub">₽</span></div>
<div class="t" style="right:516.9px;top:237.08px;font-size:15.5px;letter-spacing:0.45px;color:#888">12 922 <span class="rub">₽</span></div>
<div class="t" style="right:400.5px;top:213.31px;font-size:17px;letter-spacing:0.2px;color:#000">5 075 <span class="rub">₽</span></div>
<div class="t" style="right:400.5px;top:237.08px;font-size:15.5px;letter-spacing:0.45px;color:#888">13 195 <span class="rub">₽</span></div>
<div class="t" style="right:284.1px;top:213.31px;font-size:17px;letter-spacing:0.2px;color:#000">5 040 <span class="rub">₽</span></div>
<div class="t" style="right:284.1px;top:237.08px;font-size:15.5px;letter-spacing:0.45px;color:#888">14 616 <span class="rub">₽</span></div>
<svg style="left:1157.4px;top:217.3px" width="30" height="30" viewBox="0 0 30 30"><circle cx="15" cy="15" r="12.6" fill="none" stroke="#ededed" stroke-width="4.1"/><path d="M6.6 23.4L23.4 6.6" stroke="#ededed" stroke-width="4.1"/></svg>
<svg style="left:1273.8px;top:217.3px" width="30" height="30" viewBox="0 0 30 30"><circle cx="15" cy="15" r="12.6" fill="none" stroke="#ededed" stroke-width="4.1"/><path d="M6.6 23.4L23.4 6.6" stroke="#ededed" stroke-width="4.1"/></svg>
<div class="a" style="left:0;top:309.10px;width:1400px;height:1.3px;background:#e2e2e2"></div>
<div class="a" style="left:8px;top:267.25px;width:7.5px;height:14.5px;border-radius:2.5px;background:#ed7d31"></div>
<div class="t" style="left:18.50px;top:266.09px;font-size:18.5px;color:#000;transform:scaleX(0.812);">GROUP</div>
<div class="t" style="left:8.00px;top:288.73px;font-size:15.5px;color:#8c8c8c;transform:scaleX(0.905);">Групповой тариф</div>
<div class="t" style="right:1098.9px;top:265.06px;font-size:17px;letter-spacing:0.2px;color:#a9a9a9">2 000 <span class="rub">₽</span></div>
<div class="t" style="right:1098.9px;top:288.83px;font-size:15.5px;letter-spacing:0.45px;color:#cacaca">6 500 <span class="rub">₽</span></div>
<div class="t" style="right:982.5px;top:265.06px;font-size:17px;letter-spacing:0.2px;color:#000">3 000 <span class="rub">₽</span></div>
<div class="t" style="right:982.5px;top:288.83px;font-size:15.5px;letter-spacing:0.45px;color:#888">9 500 <span class="rub">₽</span></div>
<div class="t" style="right:866.1px;top:265.06px;font-size:17px;letter-spacing:0.2px;color:#000">3 500 <span class="rub">₽</span></div>
<div class="t" style="right:866.1px;top:288.83px;font-size:15.5px;letter-spacing:0.45px;color:#888">11 500 <span class="rub">₽</span></div>
<div class="t" style="right:749.7px;top:265.06px;font-size:17px;letter-spacing:0.2px;color:#000">3 500 <span class="rub">₽</span></div>
<div class="t" style="right:749.7px;top:288.83px;font-size:15.5px;letter-spacing:0.45px;color:#888">11 500 <span class="rub">₽</span></div>
<div class="t" style="right:633.3px;top:265.06px;font-size:17px;letter-spacing:0.2px;color:#000">4 000 <span class="rub">₽</span></div>
<div class="t" style="right:633.3px;top:288.83px;font-size:15.5px;letter-spacing:0.45px;color:#888">14 000 <span class="rub">₽</span></div>
<div class="t" style="right:516.9px;top:265.06px;font-size:17px;letter-spacing:0.2px;color:#000">5 000 <span class="rub">₽</span></div>
<div class="t" style="right:516.9px;top:288.83px;font-size:15.5px;letter-spacing:0.45px;color:#888">17 500 <span class="rub">₽</span></div>
<div class="t" style="right:400.5px;top:265.06px;font-size:17px;letter-spacing:0.2px;color:#000">6 000 <span class="rub">₽</span></div>
<div class="t" style="right:400.5px;top:288.83px;font-size:15.5px;letter-spacing:0.45px;color:#888">20 000 <span class="rub">₽</span></div>
<div class="t" style="right:284.1px;top:265.06px;font-size:17px;letter-spacing:0.2px;color:#000">2 500 <span class="rub">₽</span></div>
<div class="t" style="right:284.1px;top:288.83px;font-size:15.5px;letter-spacing:0.45px;color:#888">8 000 <span class="rub">₽</span></div>
<svg style="left:1157.4px;top:269.0px" width="30" height="30" viewBox="0 0 30 30"><circle cx="15" cy="15" r="12.6" fill="none" stroke="#ededed" stroke-width="4.1"/><path d="M6.6 23.4L23.4 6.6" stroke="#ededed" stroke-width="4.1"/></svg>
<svg style="left:1273.8px;top:269.0px" width="30" height="30" viewBox="0 0 30 30"><circle cx="15" cy="15" r="12.6" fill="none" stroke="#ededed" stroke-width="4.1"/><path d="M6.6 23.4L23.4 6.6" stroke="#ededed" stroke-width="4.1"/></svg>
<div class="a" style="left:0;top:360.85px;width:1400px;height:1.3px;background:#e2e2e2"></div>
<div class="t" style="left:8.00px;top:317.84px;font-size:18.5px;color:#000;transform:scaleX(0.914);">КОМ</div>
<div class="t" style="left:8.00px;top:340.48px;font-size:15.5px;color:#8c8c8c;transform:scaleX(0.945);">Коммерческий</div>
<div class="t" style="right:1098.9px;top:316.81px;font-size:17px;letter-spacing:0.2px;color:#a9a9a9">2 000 <span class="rub">₽</span></div>
<div class="t" style="right:1098.9px;top:340.58px;font-size:15.5px;letter-spacing:0.45px;color:#cacaca">5 800 <span class="rub">₽</span></div>
<div class="t" style="right:982.5px;top:316.81px;font-size:17px;letter-spacing:0.2px;color:#000">4 000 <span class="rub">₽</span></div>
<div class="t" style="right:982.5px;top:340.58px;font-size:15.5px;letter-spacing:0.45px;color:#888">12 000 <span class="rub">₽</span></div>
<div class="t" style="right:866.1px;top:316.81px;font-size:17px;letter-spacing:0.2px;color:#000">6 000 <span class="rub">₽</span></div>
<div class="t" style="right:866.1px;top:340.58px;font-size:15.5px;letter-spacing:0.45px;color:#888">18 000 <span class="rub">₽</span></div>
<svg style="left:575.4px;top:320.8px" width="30" height="30" viewBox="0 0 30 30"><circle cx="15" cy="15" r="12.6" fill="none" stroke="#ededed" stroke-width="4.1"/><path d="M6.6 23.4L23.4 6.6" stroke="#ededed" stroke-width="4.1"/></svg>
<svg style="left:691.8px;top:320.8px" width="30" height="30" viewBox="0 0 30 30"><circle cx="15" cy="15" r="12.6" fill="none" stroke="#ededed" stroke-width="4.1"/><path d="M6.6 23.4L23.4 6.6" stroke="#ededed" stroke-width="4.1"/></svg>
<svg style="left:808.2px;top:320.8px" width="30" height="30" viewBox="0 0 30 30"><circle cx="15" cy="15" r="12.6" fill="none" stroke="#ededed" stroke-width="4.1"/><path d="M6.6 23.4L23.4 6.6" stroke="#ededed" stroke-width="4.1"/></svg>
<svg style="left:924.6px;top:320.8px" width="30" height="30" viewBox="0 0 30 30"><circle cx="15" cy="15" r="12.6" fill="none" stroke="#ededed" stroke-width="4.1"/><path d="M6.6 23.4L23.4 6.6" stroke="#ededed" stroke-width="4.1"/></svg>
<svg style="left:1041.0px;top:320.8px" width="30" height="30" viewBox="0 0 30 30"><circle cx="15" cy="15" r="12.6" fill="none" stroke="#ededed" stroke-width="4.1"/><path d="M6.6 23.4L23.4 6.6" stroke="#ededed" stroke-width="4.1"/></svg>
<svg style="left:1157.4px;top:320.8px" width="30" height="30" viewBox="0 0 30 30"><circle cx="15" cy="15" r="12.6" fill="none" stroke="#ededed" stroke-width="4.1"/><path d="M6.6 23.4L23.4 6.6" stroke="#ededed" stroke-width="4.1"/></svg>
<svg style="left:1273.8px;top:320.8px" width="30" height="30" viewBox="0 0 30 30"><circle cx="15" cy="15" r="12.6" fill="none" stroke="#ededed" stroke-width="4.1"/><path d="M6.6 23.4L23.4 6.6" stroke="#ededed" stroke-width="4.1"/></svg>
<div class="a" style="left:0;top:412.60px;width:1400px;height:1.3px;background:#e2e2e2"></div>
<div class="t" style="left:8.00px;top:369.59px;font-size:18.5px;color:#000;transform:scaleX(0.848);">БИЗНЕС</div>
<div class="t" style="left:8.00px;top:392.23px;font-size:15.5px;color:#8c8c8c;transform:scaleX(0.902);">Бизнес</div>
<div class="t" style="right:1098.9px;top:368.56px;font-size:17px;letter-spacing:0.2px;color:#a9a9a9">100 <span class="rub">₽</span></div>
<div class="t" style="right:1098.9px;top:392.33px;font-size:15.5px;letter-spacing:0.45px;color:#cacaca">300 <span class="rub">₽</span></div>
<svg style="left:342.6px;top:372.5px" width="30" height="30" viewBox="0 0 30 30"><circle cx="15" cy="15" r="14.6" fill="#efefef"/><path d="M10.6 11.6Q10.8 7.6 15 7.6Q19.3 7.6 19.3 11.2Q19.3 13.4 17 14.6Q15.2 15.6 15.2 17.6" fill="none" stroke="#fff" stroke-width="3.2"/><rect x="13.5" y="19.8" width="3.4" height="3.4" fill="#fff"/></svg>
<svg style="left:459.0px;top:372.5px" width="30" height="30" viewBox="0 0 30 30"><circle cx="15" cy="15" r="14.6" fill="#efefef"/><path d="M10.6 11.6Q10.8 7.6 15 7.6Q19.3 7.6 19.3 11.2Q19.3 13.4 17 14.6Q15.2 15.6 15.2 17.6" fill="none" stroke="#fff" stroke-width="3.2"/><rect x="13.5" y="19.8" width="3.4" height="3.4" fill="#fff"/></svg>
<svg style="left:575.4px;top:372.5px" width="30" height="30" viewBox="0 0 30 30"><circle cx="15" cy="15" r="12.6" fill="none" stroke="#ededed" stroke-width="4.1"/><path d="M6.6 23.4L23.4 6.6" stroke="#ededed" stroke-width="4.1"/></svg>
<svg style="left:691.8px;top:372.5px" width="30" height="30" viewBox="0 0 30 30"><circle cx="15" cy="15" r="12.6" fill="none" stroke="#ededed" stroke-width="4.1"/><path d="M6.6 23.4L23.4 6.6" stroke="#ededed" stroke-width="4.1"/></svg>
<svg style="left:808.2px;top:372.5px" width="30" height="30" viewBox="0 0 30 30"><circle cx="15" cy="15" r="12.6" fill="none" stroke="#ededed" stroke-width="4.1"/><path d="M6.6 23.4L23.4 6.6" stroke="#ededed" stroke-width="4.1"/></svg>
<svg style="left:924.6px;top:372.5px" width="30" height="30" viewBox="0 0 30 30"><circle cx="15" cy="15" r="12.6" fill="none" stroke="#ededed" stroke-width="4.1"/><path d="M6.6 23.4L23.4 6.6" stroke="#ededed" stroke-width="4.1"/></svg>
<svg style="left:1041.0px;top:372.5px" width="30" height="30" viewBox="0 0 30 30"><circle cx="15" cy="15" r="12.6" fill="none" stroke="#ededed" stroke-width="4.1"/><path d="M6.6 23.4L23.4 6.6" stroke="#ededed" stroke-width="4.1"/></svg>
<svg style="left:1157.4px;top:372.5px" width="30" height="30" viewBox="0 0 30 30"><circle cx="15" cy="15" r="12.6" fill="none" stroke="#ededed" stroke-width="4.1"/><path d="M6.6 23.4L23.4 6.6" stroke="#ededed" stroke-width="4.1"/></svg>
<svg style="left:1273.8px;top:372.5px" width="30" height="30" viewBox="0 0 30 30"><circle cx="15" cy="15" r="12.6" fill="none" stroke="#ededed" stroke-width="4.1"/><path d="M6.6 23.4L23.4 6.6" stroke="#ededed" stroke-width="4.1"/></svg>
<div class="a" style="left:0;top:464.35px;width:1400px;height:1.3px;background:#e2e2e2"></div>
<div class="a" style="left:8px;top:422.50px;width:7.5px;height:14.5px;border-radius:2.5px;background:#ffff00"></div>
<div class="t" style="left:18.50px;top:421.34px;font-size:18.5px;color:#000;transform:scaleX(0.860);">HOTELLAB</div>
<div class="t" style="left:8.00px;top:443.98px;font-size:15.5px;color:#8c8c8c;transform:scaleX(0.892);">Тариф Hotellab</div>
<svg style="left:226.2px;top:424.3px" width="30" height="30" viewBox="0 0 30 30"><circle cx="15" cy="15" r="14.6" fill="#efefef"/><path d="M10.6 11.6Q10.8 7.6 15 7.6Q19.3 7.6 19.3 11.2Q19.3 13.4 17 14.6Q15.2 15.6 15.2 17.6" fill="none" stroke="#fff" stroke-width="3.2"/><rect x="13.5" y="19.8" width="3.4" height="3.4" fill="#fff"/></svg>
<svg style="left:342.6px;top:424.3px" width="30" height="30" viewBox="0 0 30 30"><circle cx="15" cy="15" r="14.6" fill="#efefef"/><path d="M10.6 11.6Q10.8 7.6 15 7.6Q19.3 7.6 19.3 11.2Q19.3 13.4 17 14.6Q15.2 15.6 15.2 17.6" fill="none" stroke="#fff" stroke-width="3.2"/><rect x="13.5" y="19.8" width="3.4" height="3.4" fill="#fff"/></svg>
<svg style="left:459.0px;top:424.3px" width="30" height="30" viewBox="0 0 30 30"><circle cx="15" cy="15" r="14.6" fill="#efefef"/><path d="M10.6 11.6Q10.8 7.6 15 7.6Q19.3 7.6 19.3 11.2Q19.3 13.4 17 14.6Q15.2 15.6 15.2 17.6" fill="none" stroke="#fff" stroke-width="3.2"/><rect x="13.5" y="19.8" width="3.4" height="3.4" fill="#fff"/></svg>
<svg style="left:575.4px;top:424.3px" width="30" height="30" viewBox="0 0 30 30"><circle cx="15" cy="15" r="14.6" fill="#efefef"/><path d="M10.6 11.6Q10.8 7.6 15 7.6Q19.3 7.6 19.3 11.2Q19.3 13.4 17 14.6Q15.2 15.6 15.2 17.6" fill="none" stroke="#fff" stroke-width="3.2"/><rect x="13.5" y="19.8" width="3.4" height="3.4" fill="#fff"/></svg>
<svg style="left:691.8px;top:424.3px" width="30" height="30" viewBox="0 0 30 30"><circle cx="15" cy="15" r="14.6" fill="#efefef"/><path d="M10.6 11.6Q10.8 7.6 15 7.6Q19.3 7.6 19.3 11.2Q19.3 13.4 17 14.6Q15.2 15.6 15.2 17.6" fill="none" stroke="#fff" stroke-width="3.2"/><rect x="13.5" y="19.8" width="3.4" height="3.4" fill="#fff"/></svg>
<svg style="left:808.2px;top:424.3px" width="30" height="30" viewBox="0 0 30 30"><circle cx="15" cy="15" r="14.6" fill="#efefef"/><path d="M10.6 11.6Q10.8 7.6 15 7.6Q19.3 7.6 19.3 11.2Q19.3 13.4 17 14.6Q15.2 15.6 15.2 17.6" fill="none" stroke="#fff" stroke-width="3.2"/><rect x="13.5" y="19.8" width="3.4" height="3.4" fill="#fff"/></svg>
<svg style="left:924.6px;top:424.3px" width="30" height="30" viewBox="0 0 30 30"><circle cx="15" cy="15" r="14.6" fill="#efefef"/><path d="M10.6 11.6Q10.8 7.6 15 7.6Q19.3 7.6 19.3 11.2Q19.3 13.4 17 14.6Q15.2 15.6 15.2 17.6" fill="none" stroke="#fff" stroke-width="3.2"/><rect x="13.5" y="19.8" width="3.4" height="3.4" fill="#fff"/></svg>
<svg style="left:1041.0px;top:424.3px" width="30" height="30" viewBox="0 0 30 30"><circle cx="15" cy="15" r="12.6" fill="none" stroke="#ededed" stroke-width="4.1"/><path d="M6.6 23.4L23.4 6.6" stroke="#ededed" stroke-width="4.1"/></svg>
<svg style="left:1157.4px;top:424.3px" width="30" height="30" viewBox="0 0 30 30"><circle cx="15" cy="15" r="12.6" fill="none" stroke="#ededed" stroke-width="4.1"/><path d="M6.6 23.4L23.4 6.6" stroke="#ededed" stroke-width="4.1"/></svg>
<svg style="left:1273.8px;top:424.3px" width="30" height="30" viewBox="0 0 30 30"><circle cx="15" cy="15" r="12.6" fill="none" stroke="#ededed" stroke-width="4.1"/><path d="M6.6 23.4L23.4 6.6" stroke="#ededed" stroke-width="4.1"/></svg>
<div class="a" style="left:0;top:516.10px;width:1400px;height:1.3px;background:#e2e2e2"></div>
<div class="t" style="left:8.00px;top:473.09px;font-size:18.5px;color:#000;transform:scaleX(0.899);">ОДИННОМ</div>
<div class="t" style="left:8.00px;top:495.73px;font-size:15.5px;color:#8c8c8c;transform:scaleX(0.934);">Один номер</div>
<div class="t" style="right:1098.9px;top:472.06px;font-size:17px;letter-spacing:0.2px;color:#a9a9a9">1 500 <span class="rub">₽</span></div>
<div class="t" style="right:1098.9px;top:495.83px;font-size:15.5px;letter-spacing:0.45px;color:#cacaca">4 500 <span class="rub">₽</span></div>
<div class="t" style="right:982.5px;top:472.06px;font-size:17px;letter-spacing:0.2px;color:#000">2 500 <span class="rub">₽</span></div>
<div class="t" style="right:982.5px;top:495.83px;font-size:15.5px;letter-spacing:0.45px;color:#888">7 500 <span class="rub">₽</span></div>
<svg style="left:459.0px;top:476.0px" width="30" height="30" viewBox="0 0 30 30"><circle cx="15" cy="15" r="12.6" fill="none" stroke="#ededed" stroke-width="4.1"/><path d="M6.6 23.4L23.4 6.6" stroke="#ededed" stroke-width="4.1"/></svg>
<svg style="left:575.4px;top:476.0px" width="30" height="30" viewBox="0 0 30 30"><circle cx="15" cy="15" r="12.6" fill="none" stroke="#ededed" stroke-width="4.1"/><path d="M6.6 23.4L23.4 6.6" stroke="#ededed" stroke-width="4.1"/></svg>
<svg style="left:691.8px;top:476.0px" width="30" height="30" viewBox="0 0 30 30"><circle cx="15" cy="15" r="12.6" fill="none" stroke="#ededed" stroke-width="4.1"/><path d="M6.6 23.4L23.4 6.6" stroke="#ededed" stroke-width="4.1"/></svg>
<svg style="left:808.2px;top:476.0px" width="30" height="30" viewBox="0 0 30 30"><circle cx="15" cy="15" r="12.6" fill="none" stroke="#ededed" stroke-width="4.1"/><path d="M6.6 23.4L23.4 6.6" stroke="#ededed" stroke-width="4.1"/></svg>
<svg style="left:924.6px;top:476.0px" width="30" height="30" viewBox="0 0 30 30"><circle cx="15" cy="15" r="12.6" fill="none" stroke="#ededed" stroke-width="4.1"/><path d="M6.6 23.4L23.4 6.6" stroke="#ededed" stroke-width="4.1"/></svg>
<svg style="left:1041.0px;top:476.0px" width="30" height="30" viewBox="0 0 30 30"><circle cx="15" cy="15" r="12.6" fill="none" stroke="#ededed" stroke-width="4.1"/><path d="M6.6 23.4L23.4 6.6" stroke="#ededed" stroke-width="4.1"/></svg>
<svg style="left:1157.4px;top:476.0px" width="30" height="30" viewBox="0 0 30 30"><circle cx="15" cy="15" r="12.6" fill="none" stroke="#ededed" stroke-width="4.1"/><path d="M6.6 23.4L23.4 6.6" stroke="#ededed" stroke-width="4.1"/></svg>
<svg style="left:1273.8px;top:476.0px" width="30" height="30" viewBox="0 0 30 30"><circle cx="15" cy="15" r="12.6" fill="none" stroke="#ededed" stroke-width="4.1"/><path d="M6.6 23.4L23.4 6.6" stroke="#ededed" stroke-width="4.1"/></svg>
<div class="a" style="left:0;top:567.85px;width:1400px;height:1.3px;background:#e2e2e2"></div>
<div class="t" style="left:8.00px;top:524.84px;font-size:18.5px;color:#000;transform:scaleX(0.833);">ТЕСТ Л</div>
<div class="a" style="left:227.5px;top:532.7px;width:5px;height:20px;background:#f1f1f1"></div><div class="a" style="left:235.5px;top:535.7px;width:14px;height:20px;border-radius:6px 6px 0 0;border:3px solid #f1f1f1"></div>
<div class="a" style="left:343.90000000000003px;top:532.7px;width:5px;height:20px;background:#f1f1f1"></div><div class="a" style="left:351.90000000000003px;top:535.7px;width:14px;height:20px;border-radius:6px 6px 0 0;border:3px solid #f1f1f1"></div>
<svg style="left:459.0px;top:527.8px" width="30" height="30" viewBox="0 0 30 30"><circle cx="15" cy="15" r="12.6" fill="none" stroke="#ededed" stroke-width="4.1"/><path d="M6.6 23.4L23.4 6.6" stroke="#ededed" stroke-width="4.1"/></svg>
<svg style="left:575.4px;top:527.8px" width="30" height="30" viewBox="0 0 30 30"><circle cx="15" cy="15" r="12.6" fill="none" stroke="#ededed" stroke-width="4.1"/><path d="M6.6 23.4L23.4 6.6" stroke="#ededed" stroke-width="4.1"/></svg>
<svg style="left:691.8px;top:527.8px" width="30" height="30" viewBox="0 0 30 30"><circle cx="15" cy="15" r="12.6" fill="none" stroke="#ededed" stroke-width="4.1"/><path d="M6.6 23.4L23.4 6.6" stroke="#ededed" stroke-width="4.1"/></svg>
<svg style="left:808.2px;top:527.8px" width="30" height="30" viewBox="0 0 30 30"><circle cx="15" cy="15" r="12.6" fill="none" stroke="#ededed" stroke-width="4.1"/><path d="M6.6 23.4L23.4 6.6" stroke="#ededed" stroke-width="4.1"/></svg>
<svg style="left:924.6px;top:527.8px" width="30" height="30" viewBox="0 0 30 30"><circle cx="15" cy="15" r="12.6" fill="none" stroke="#ededed" stroke-width="4.1"/><path d="M6.6 23.4L23.4 6.6" stroke="#ededed" stroke-width="4.1"/></svg>
<svg style="left:1041.0px;top:527.8px" width="30" height="30" viewBox="0 0 30 30"><circle cx="15" cy="15" r="12.6" fill="none" stroke="#ededed" stroke-width="4.1"/><path d="M6.6 23.4L23.4 6.6" stroke="#ededed" stroke-width="4.1"/></svg>
<svg style="left:1157.4px;top:527.8px" width="30" height="30" viewBox="0 0 30 30"><circle cx="15" cy="15" r="12.6" fill="none" stroke="#ededed" stroke-width="4.1"/><path d="M6.6 23.4L23.4 6.6" stroke="#ededed" stroke-width="4.1"/></svg>
<svg style="left:1273.8px;top:527.8px" width="30" height="30" viewBox="0 0 30 30"><circle cx="15" cy="15" r="12.6" fill="none" stroke="#ededed" stroke-width="4.1"/><path d="M6.6 23.4L23.4 6.6" stroke="#ededed" stroke-width="4.1"/></svg>
</div>
<div class="a" style="left:372px;top:341.5px;width:116.5px;height:46.5px;background:#cfe4ee;border:1.3px solid #3c80c2;border-bottom:none"></div>
<div class="t r" style="left:481.50px;top:346.56px;font-size:17px;letter-spacing:0.2px;color:#000;transform:translateX(-100%);">3 950 <span class="rub">₽</span></div>
<div class="t r" style="left:481.50px;top:370.33px;font-size:15.5px;letter-spacing:0.45px;color:#8a8a8a;transform:translateX(-100%);">11 850 <span class="rub">₽</span></div>
<div class="a" style="left:365px;top:335px;width:131px;height:57px;border:5px solid #ec1c24"></div>
<svg style="left:1471.3px;top:293.6px;" width="7" height="4.2" viewBox="0 0 7 4.2"><path d="M0 4.1L3.5 0.2L7 4.1Z" fill="#666"/></svg>
<div class="a" style="left:1472.3px;top:304px;width:5.4px;height:348px;background:#cdcbcc"></div>
<svg style="left:1471.3px;top:814px;" width="7" height="4.2" viewBox="0 0 7 4.2"><path d="M0 0.1L3.5 4L7 0.1Z" fill="#666"/></svg>
<svg style="left:260px;top:830.5px;" width="7" height="9" viewBox="0 0 7 9"><path d="M6.4 0.3L0.2 4.5L6.4 8.7Z" fill="#666"/></svg>
<div class="a" style="left:270.8px;top:833px;width:1120.2px;height:5px;background:#d3d1d2"></div>
<svg style="left:1452.8px;top:830.5px;" width="7" height="9" viewBox="0 0 7 9"><path d="M0.2 0.3L6.4 4.5L0.2 8.7Z" fill="#666"/></svg>
<div class="t" style="left:1496.50px;top:231.61px;font-size:17px;color:#8a8a8a;transform:scaleX(0.924);">Скидка</div>
<div class="a" style="left:1496px;top:252px;width:353px;height:33px;border:2px solid #d9d9d9;background:#fff"></div>
<div class="t" style="left:1501.30px;top:259.76px;font-size:18px;color:#777;transform:scaleX(0.926);">не предоставляется</div>
<svg style="left:1834px;top:264px;" width="9" height="7" viewBox="0 0 9 7"><path d="M0 0.5H9L4.5 6.5Z" fill="#666"/></svg>
<div class="t" style="left:1496.50px;top:299.61px;font-size:17px;color:#8a8a8a;transform:scaleX(0.927);">Пакеты</div>
<div class="a" style="left:1496px;top:316.5px;width:353px;height:235px;border:1px solid #bcbcbc;border-top:2px solid #c2c2c2;border-bottom:2px solid #c0c0c0;background:#fff"></div>
<div class="a" style="left:1510px;top:333.5px;width:310px;height:33px;border:1.5px solid #d9d9d9"></div>
<div class="t" style="left:1516.00px;top:341.92px;font-size:19px;color:#c4c4c4;transform:scaleX(0.997);">Поиск</div>
<div class="a" style="left:1497px;top:381px;width:351px;height:1.3px;background:#cfcfcf"></div>
<div class="a" style="left:1497px;top:414.3px;width:351px;height:1.3px;background:#d6d6d6"></div>
<div class="a" style="left:1527px;top:382px;width:1.3px;height:33px;background:#d4d4d4"></div>
<div class="a" style="left:1682px;top:382px;width:1.3px;height:33px;background:#d4d4d4"></div>
<div class="a" style="left:1748px;top:382px;width:1.3px;height:33px;background:#d4d4d4"></div>
<div class="t" style="left:1533.50px;top:390.34px;font-size:18.5px;color:#222;transform:scaleX(0.885);">Услуга</div>
<div class="t" style="left:1688.40px;top:390.34px;font-size:18.5px;color:#222;transform:scaleX(0.998);">К-во</div>
<div class="a" style="left:1497px;top:415.8px;width:351px;height:33.85px;background:#a9c8e6"></div>
<div class="a" style="left:1683.3px;top:416.8px;width:64.5px;height:32px;background:#fff;border:1.3px solid #dcdcdc"></div>
<svg style="left:1731.8px;top:424.0px;" width="8.4" height="5.4" viewBox="0 0 8.4 5.4"><path d="M0 5.2L4.2 0.2L8.4 5.2Z" fill="#666"/></svg>
<svg style="left:1731.8px;top:438.0px;" width="8.4" height="5.4" viewBox="0 0 8.4 5.4"><path d="M0 0.2L4.2 5.2L8.4 0.2Z" fill="#666"/></svg>
<div class="a" style="left:1500.5px;top:423.0px;width:20.5px;height:20.2px;background:#fdfdfe;border:2px solid #2b76bc;border-radius:4px"></div>
<svg style="left:1504px;top:427.8px;" width="14" height="11" viewBox="0 0 14 11"><path d="M0.9 4.9L5.1 9.3L13.4 1.8" fill="none" stroke="#2b76bc" stroke-width="2.5"/></svg>
<div class="t" style="left:1528.30px;top:424.34px;font-size:18.5px;color:#111;transform:scaleX(0.980);">B&amp;B</div>
<div class="a" style="left:1497px;top:449.55px;width:351px;height:33.85px;background:#f4f4f4"></div>
<div class="a" style="left:1683.3px;top:450.55px;width:64.5px;height:32px;background:#fff;border:1.3px solid #dcdcdc"></div>
<svg style="left:1731.8px;top:457.75px;" width="8.4" height="5.4" viewBox="0 0 8.4 5.4"><path d="M0 5.2L4.2 0.2L8.4 5.2Z" fill="#666"/></svg>
<svg style="left:1731.8px;top:471.75px;" width="8.4" height="5.4" viewBox="0 0 8.4 5.4"><path d="M0 0.2L4.2 5.2L8.4 0.2Z" fill="#666"/></svg>
<div class="a" style="left:1500.5px;top:456.75px;width:20.5px;height:20.2px;background:#fff;border:1px solid #dcdcdc;border-radius:4px"></div>
<div class="t" style="left:1528.30px;top:458.09px;font-size:18.5px;color:#111;transform:scaleX(0.899);">HB</div>
<div class="a" style="left:1497px;top:483.3px;width:351px;height:33.85px;background:#fff"></div>
<div class="a" style="left:1683.3px;top:484.3px;width:64.5px;height:32px;background:#fff;border:1.3px solid #dcdcdc"></div>
<svg style="left:1731.8px;top:491.5px;" width="8.4" height="5.4" viewBox="0 0 8.4 5.4"><path d="M0 5.2L4.2 0.2L8.4 5.2Z" fill="#666"/></svg>
<svg style="left:1731.8px;top:505.5px;" width="8.4" height="5.4" viewBox="0 0 8.4 5.4"><path d="M0 0.2L4.2 5.2L8.4 0.2Z" fill="#666"/></svg>
<div class="a" style="left:1500.5px;top:490.5px;width:20.5px;height:20.2px;background:#fff;border:1px solid #dcdcdc;border-radius:4px"></div>
<div class="t" style="left:1528.30px;top:491.84px;font-size:18.5px;color:#111;transform:scaleX(0.844);">FB</div>
<div class="a" style="left:1497px;top:517.05px;width:351px;height:33.85px;background:#f4f4f4"></div>
<div class="a" style="left:1683.3px;top:518.05px;width:64.5px;height:32px;background:#fff;border:1.3px solid #dcdcdc"></div>
<svg style="left:1731.8px;top:525.25px;" width="8.4" height="5.4" viewBox="0 0 8.4 5.4"><path d="M0 5.2L4.2 0.2L8.4 5.2Z" fill="#666"/></svg>
<svg style="left:1731.8px;top:539.25px;" width="8.4" height="5.4" viewBox="0 0 8.4 5.4"><path d="M0 0.2L4.2 5.2L8.4 0.2Z" fill="#666"/></svg>
<div class="a" style="left:1500.5px;top:524.25px;width:20.5px;height:20.2px;background:#fff;border:1px solid #dcdcdc;border-radius:4px"></div>
<div class="t" style="left:1528.30px;top:525.59px;font-size:18.5px;color:#111;transform:scaleX(0.876);">КС</div>
<div class="a" style="left:1496px;top:559px;width:353px;height:256px;border:1px solid #c4c4c4;border-top:2px solid #d0d0d0;border-bottom:2px solid #c8c8c8;background:#fff"></div>
<div class="a" style="left:1497px;top:592.5px;width:351px;height:1.3px;background:#d9d9d9"></div>
<div class="a" style="left:1553px;top:561px;width:1.3px;height:32px;background:#d4d4d4"></div>
<div class="a" style="left:1682px;top:561px;width:1.3px;height:32px;background:#d4d4d4"></div>
<div class="a" style="left:1787px;top:561px;width:1.3px;height:32px;background:#d4d4d4"></div>
<div class="t" style="left:1502.00px;top:567.76px;font-size:18px;color:#333;transform:scaleX(0.942);">Дата</div>
<div class="t" style="left:1559.50px;top:567.76px;font-size:18px;color:#333;transform:scaleX(0.956);">Прожив.</div>
<div class="t" style="left:1688.50px;top:567.76px;font-size:18px;color:#333;transform:scaleX(0.954);">Пакет</div>
<div class="a" style="left:1497px;top:594.7px;width:351px;height:29.3px;background:#a9c8e6"></div>
<div class="t" style="left:1502.50px;top:601.26px;font-size:18px;color:#111;transform:scaleX(0.962);">09.11</div>
<div class="t r" style="left:1684.30px;top:601.26px;font-size:18px;color:#111;transform:translateX(-100%) scaleX(0.994);">3 950 <span class="rub">₽</span></div>
<div class="t r" style="left:1781.20px;top:601.26px;font-size:18px;color:#111;transform:translateX(-100%) scaleX(0.952);">0,00</div>
<div class="a" style="left:1497px;top:624.0px;width:351px;height:29.3px;background:#f4f4f4"></div>
<div class="t" style="left:1502.50px;top:630.56px;font-size:18px;color:#111;transform:scaleX(0.962);">10.11</div>
<div class="t r" style="left:1684.30px;top:630.56px;font-size:18px;color:#111;transform:translateX(-100%) scaleX(0.994);">3 950 <span class="rub">₽</span></div>
<div class="t r" style="left:1781.20px;top:630.56px;font-size:18px;color:#111;transform:translateX(-100%) scaleX(0.952);">0,00</div>
<div class="a" style="left:1497px;top:653.3000000000001px;width:351px;height:29.3px;background:#fff"></div>
<div class="t" style="left:1502.50px;top:659.86px;font-size:18px;color:#111;transform:scaleX(0.993);">11.11</div>
<div class="t r" style="left:1684.30px;top:659.86px;font-size:18px;color:#111;transform:translateX(-100%) scaleX(0.994);">3 950 <span class="rub">₽</span></div>
<div class="t r" style="left:1781.20px;top:659.86px;font-size:18px;color:#111;transform:translateX(-100%) scaleX(0.952);">0,00</div>
<div class="a" style="left:1497px;top:768px;width:351px;height:1.3px;background:#d6d6d6"></div>
<div class="a" style="left:1555px;top:773.5px;width:125.5px;height:34.5px;border:1.3px solid #d4d4d4"></div>
<div class="a" style="left:1684px;top:773.5px;width:100.5px;height:34.5px;border:1.3px solid #d4d4d4"></div>
<div class="t r" style="left:1675.30px;top:782.76px;font-size:18px;color:#222;transform:translateX(-100%) scaleX(0.977);">11850,00</div>
<div class="t r" style="left:1779.50px;top:782.76px;font-size:18px;color:#222;transform:translateX(-100%) scaleX(0.998);">0</div>
<div class="a" style="left:1499.5px;top:823px;width:50px;height:26px;background:#dddddd;border-radius:13px"></div>
<div class="a" style="left:1501.5px;top:825px;width:22px;height:22px;background:#fff;border-radius:11px"></div>
<div class="t" style="left:1553.50px;top:827.76px;font-size:18px;color:#111;transform:scaleX(0.947);">Ускоренный расчёт</div>
<div class="a" style="left:1716.5px;top:823px;width:50px;height:26px;background:#dddddd;border-radius:13px"></div>
<div class="a" style="left:1718.5px;top:825px;width:22px;height:22px;background:#fff;border-radius:11px"></div>
<div class="t" style="left:1771.00px;top:827.76px;font-size:18px;color:#111;transform:scaleX(0.922);">В валюте</div>
<div class="t" style="left:73.80px;top:866.21px;font-size:17px;color:#8a8a8a;transform:scaleX(0.941);">Даты применения изменений (с/по)</div>
<div class="a" style="left:73px;top:885px;width:437px;height:33px;border:1px solid #cdcdcd;background:#fff"></div>
<svg style="left:476px;top:896.8px;" width="11" height="10.2" viewBox="0 0 11 10.2"><path d="M0.6 0.6L10.4 9.6M10.4 0.6L0.6 9.6" stroke="#3f4144" stroke-width="1.7"/></svg>
<svg style="left:497px;top:898.8px;" width="8" height="3.6" viewBox="0 0 8 3.6"><path d="M0 0.2H8L4 3.5Z" fill="#3f4144"/></svg>
<div class="a" style="left:518px;top:885px;width:437px;height:33px;border:1px solid #cdcdcd;background:#fff"></div>
<svg style="left:921px;top:896.8px;" width="11" height="10.2" viewBox="0 0 11 10.2"><path d="M0.6 0.6L10.4 9.6M10.4 0.6L0.6 9.6" stroke="#3f4144" stroke-width="1.7"/></svg>
<svg style="left:942px;top:898.8px;" width="8" height="3.6" viewBox="0 0 8 3.6"><path d="M0 0.2H8L4 3.5Z" fill="#3f4144"/></svg>
<div class="t" style="left:963.00px;top:866.21px;font-size:17px;color:#8a8a8a;transform:scaleX(0.931);">Фиксировать тариф</div>
<div class="a" style="left:959.5px;top:887.5px;width:50px;height:26px;background:#dddddd;border-radius:13px"></div>
<div class="a" style="left:961.5px;top:889.5px;width:22px;height:22px;background:#fff;border-radius:11px"></div>
<div class="t" style="left:1014.00px;top:891.76px;font-size:18px;color:#111;transform:scaleX(0.931);">Не пересчитывать стоимость</div>
<div class="t" style="left:1408.50px;top:866.21px;font-size:17px;color:#8a8a8a;transform:scaleX(0.935);">Причина</div>
<div class="a" style="left:1408px;top:885px;width:437px;height:33px;border:2px solid #e9e9e9;background:#fff"></div>
<div class="t" style="left:1412.50px;top:892.76px;font-size:18px;color:#c9c9c9;transform:scaleX(0.974);">укажите причину</div>
<svg style="left:1829px;top:899px;" width="8" height="5" viewBox="0 0 8 5"><path d="M0 0.5H8L4 4.5Z" fill="#c4c4c4"/></svg>
<div class="a" style="left:1564px;top:958px;width:146px;height:37px;background:#3d9954;border:1px solid #35874a;border-radius:5px"></div>
<div class="t" style="left:1587.70px;top:966.22px;font-size:21px;color:#fff;transform:scaleX(0.925);">Применить</div>
<div class="a" style="left:1718px;top:958px;width:133px;height:37px;background:#fff;border:1px solid #d9d9d9;border-radius:5px"></div>
<div class="t" style="left:1741.80px;top:966.22px;font-size:21px;color:#555;transform:scaleX(0.908);">Отменить</div>
</div></body></html>
